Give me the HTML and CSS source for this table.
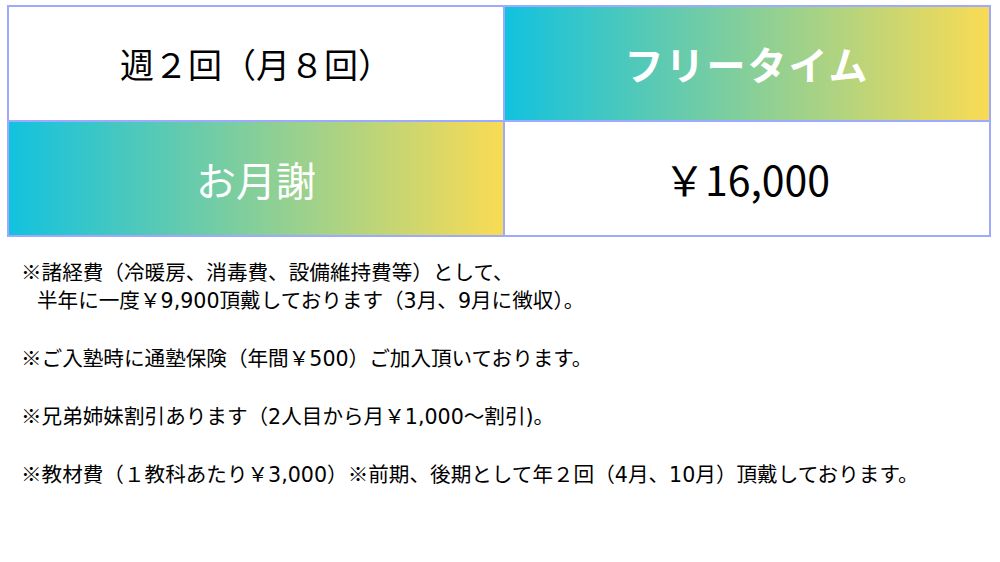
FILE: index.html
```html
<!DOCTYPE html>
<html lang="ja">
<head>
<meta charset="utf-8">
<link rel="stylesheet" href="styles.css">
</head>
<body>
<div class="page">
  <div class="price-table">
    <div class="cell plain label">週２回（月８回）</div>
    <div class="cell grad title">フリータイム</div>
    <div class="cell grad head">お月謝</div>
    <div class="cell plain price">￥16,000</div>
  </div>
  <div class="notes">
    <p><span class="mark">※</span>諸経費（冷暖房、消毒費、設備維持費等）として、<br><span class="indent">半年に一度￥9,900頂戴しております（3月、9月に徴収）。</span></p>
    <p><span class="mark">※</span>ご入塾時に通塾保険（年間￥500）ご加入頂いております。</p>
    <p><span class="mark">※</span>兄弟姉妹割引あります（2人目から月￥1,000～割引)。</p>
    <p><span class="mark">※</span>教材費（１教科あたり￥3,000）<span class="mark">※</span>前期、後期として年２回（4月、10月）頂戴しております。</p>
  </div>
</div>
</body>
</html>
```

FILE: styles.css
```css
html, body {
  margin: 0;
  padding: 0;
  background: #ffffff;
}
body {
  font-family: "Noto Sans CJK JP", "Noto Sans", sans-serif;
  color: #000;
}
.page {
  padding: 5px 9px 0 7px;
}
.price-table {
  display: grid;
  grid-template-columns: 494px 1fr;
  grid-template-rows: 113px 113px;
  gap: 2px;
  padding: 2px;
  background: #9eaaff;
  width: 984px;
  box-sizing: border-box;
}
.cell {
  display: flex;
  align-items: center;
  justify-content: center;
  line-height: 1;
}
.plain {
  background: #ffffff;
  color: #000;
}
.grad {
  background: linear-gradient(90deg, #12c2df 0%, #f9db54 100%);
  color: #ffffff;
}
.label {
  font-size: 34px;
}
.title {
  font-size: 39px;
  font-weight: 700;
  letter-spacing: 2px;
}
.head {
  font-size: 40px;
}
.price {
  font-size: 41px;
}
.notes {
  padding: 20px 0 0 14px;
  font-family: "DejaVu Sans", "Noto Sans CJK JP", sans-serif;
  font-size: 20.6px;
  line-height: 28px;
}
.notes p {
  margin: 0 0 28px 0;
}
.mark {
  font-family: "Noto Sans CJK JP", sans-serif;
}
.indent {
  padding-left: 16px;
}
```
